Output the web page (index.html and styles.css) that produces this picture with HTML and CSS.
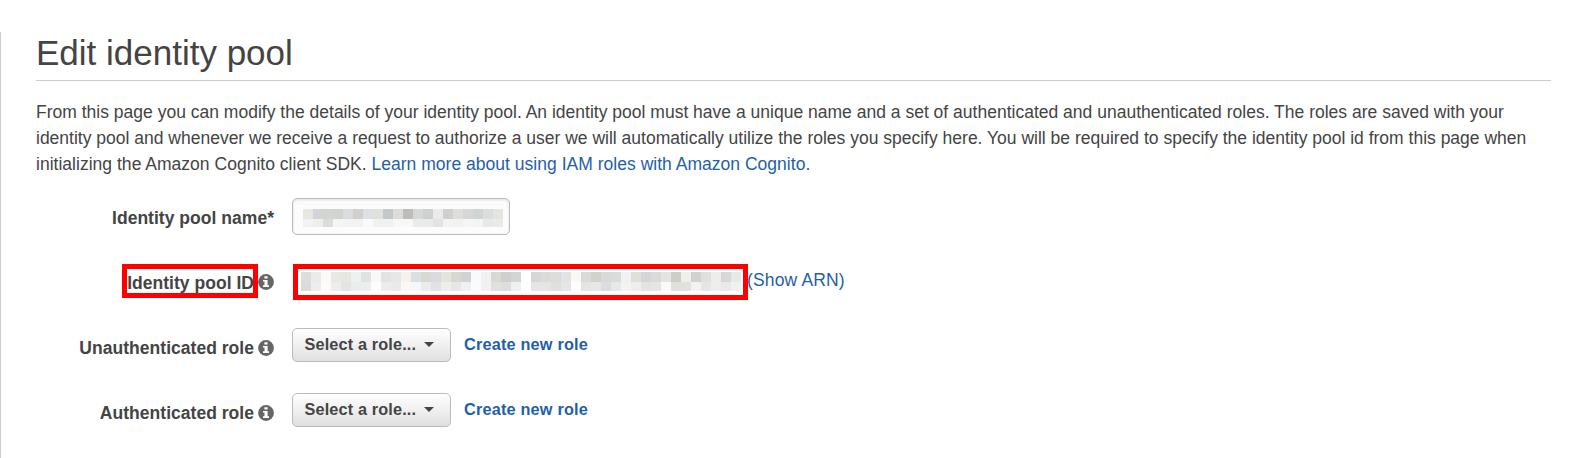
FILE: index.html
```html
<!DOCTYPE html>
<html lang="en">
<head>
<meta charset="utf-8">
<title>Edit identity pool</title>
<link rel="stylesheet" href="styles.css">
</head>
<body>
<svg class="defs" width="0" height="0" aria-hidden="true">
  <symbol id="info" viewBox="0 0 16 16">
    <circle cx="8" cy="8" r="7.9" fill="#666"/>
    <path d="M6.4 2.2h3.2v2.4H6.4zM5 5.9h4.6v5.4H11v1.8H5v-1.8h1.5V7.6H5z" fill="#fff"/>
  </symbol>
</svg>
<main class="page">
  <h1 class="title">Edit identity pool</h1>
  <p class="intro"><span class="first-line">From this page you can modify the details of your identity pool. An identity pool must have a unique name and a set of authenticated and unauthenticated roles. The roles are saved with your</span><br>identity pool and whenever we receive a request to authorize a user we will automatically utilize the roles you specify here. You will be required to specify the identity pool id from this page when<br><span class="last-line">initializing the Amazon Cognito client SDK. <a class="link" href="#">Learn more about using IAM roles with Amazon Cognito.</a></span></p>
  <div class="form">
    <div class="row">
      <div class="label">Identity pool name*</div>
      <div class="field name-field"><div class="mosaic" data-colors="e7e6df d2d4d5 d4d4d2 d2d2d0 dadddd d1d0cc dce1e3 dfe1dd c3c8ca dddeda bdbdb9 d5d8d7 cdd1d1 ecebea ced1d0 dfdfd9 d7d7da d1d5d4 dddddf e4e5e0|f2f2f2 eeeeea d9dddb f5f5f5 f3f3f3 f3f3f3 f8fafb f1f1ee f0f1f1 f8f8f6 f8f8f6 e9ebeb e9ebeb e2e3e4 f2f3f3 f1f2f1 f5f5f5 f3f5f5 e6e9e6 e9ebe9"></div></div>
    </div>
    <div class="row">
      <div class="label"><span class="mark">Identity pool ID</span><svg class="info"><use href="#info"/></svg></div>
      <div class="id-field"><div class="mosaic" data-colors="dddddb ebebe7 fbfaf8 e8e8e6 e8e8e0 edf2f1 e0e3e2 f8f8f8 e3e3e3 e6e7e6 f3f2ed dadfe0 d8d8d4 dadadf e3e4dc d8d8d3 d1d3d2 f8fafb f0f1f0 d8d9d4 cfd0ce d3d5d4 ffffff d5d6d5 dbdcd7 dddedb e1e4e4 f9f8f3 dadbd8 d1d1ce d9dad7 d8dbda f0f1f0 dfe0da d4d7d7 d9dbda e4e5e2 cecdc8 eff0eb d1d2d0 dfe1e0 edeee9 d7d8d5 e5e9e8|dbdbdc eeeeef fcfbf9 ededec e3e4e5 e9edeb edefef fdfdfb ededec e9eae9 f9f8f4 f5f8fa ececec e1e2e5 eeeeec e5e6e5 f0f0f2 f9fbfc f0f1f0 e0e1de dcdfdd edf1f2 ffffff e4e5e4 e5e6e4 dfe0dd e5e6e6 fffefe e4e5e3 e7e7e5 dbdedf e7e9e8 f3f3f1 edeeed e3e4e2 e5e6e4 fafafa e1e1dc e1e2de f2f2f2 e5e7e7 edeeed e9eae9 f0f1f1"></div></div>
      <a class="link arn" href="#">(Show ARN)</a>
    </div>
    <div class="row">
      <div class="label"><span>Unauthenticated role</span><svg class="info"><use href="#info"/></svg></div>
      <button class="select">Select a role...<span class="caret"></span></button>
      <a class="link create" href="#">Create new role</a>
    </div>
    <div class="row">
      <div class="label"><span>Authenticated role</span><svg class="info"><use href="#info"/></svg></div>
      <button class="select">Select a role...<span class="caret"></span></button>
      <a class="link create" href="#">Create new role</a>
    </div>
  </div>
</main>
<script src="mosaic.js"></script>
</body>
</html>
```
FILE: styles.css
```css
* { box-sizing: border-box; }
body {
  margin: 0;
  background: #fff;
  color: #444;
  font: 17.5px/26px "Liberation Sans", Arial, sans-serif;
}
.defs { display: block; }
.page {
  height: 426px;
  margin-top: 32px;
  padding: 0 33px 0 35px;
  border-left: 1px solid #ccc;
  overflow: hidden;
}
.title {
  margin: 0;
  height: 49px;
  border-bottom: 1px solid #ccc;
  font-size: 35px;
  font-weight: 400;
  line-height: 41px;
}
.intro { margin: 18px 0 0; white-space: nowrap; }
.first-line { letter-spacing: .006px; }
.last-line { letter-spacing: .02px; }
.link { color: #1f5fa8; text-decoration: none; }
.form { display: grid; grid-auto-rows: 65px; padding-top: 21px; }
.row { display: flex; align-items: flex-start; }
.label {
  display: flex;
  justify-content: flex-end;
  align-items: center;
  width: 238px;
  margin-right: 18px;
  padding: 7px 0 0;
  font-weight: 700;
  letter-spacing: .03px;
}
.info { width: 16px; height: 16px; margin-left: 4px; }
.mark {
  margin: -2px 0 -1px;
  padding: 4px 0 0 1px;
  line-height: 22px;
  outline: 5px solid #f00;
  outline-offset: -1px;
}
.field, .select { border: 1px solid #bbb; border-radius: 5px; }
.name-field {
  width: 218px;
  height: 37px;
  padding: 10px;
  background: #fcfcfc;
  box-shadow: inset 0 1px 3px rgba(0, 0, 0, .12);
}
.mosaic { display: grid; grid-auto-columns: 10px; grid-template-rows: 10px 8px; grid-auto-flow: column; }
.id-field {
  width: 455px;
  height: 36px;
  margin: 1px 0 0 1px;
  border: 5px solid #f00;
  padding: 3px 3px 0;
  overflow: hidden;
}
.id-field .mosaic { grid-template-rows: 10px 9px; }
.arn { margin-left: -1px; padding-top: 4px; letter-spacing: .15px; }
.select {
  display: flex;
  align-items: center;
  width: 159px;
  height: 34px;
  padding: 0 0 2px 11.5px;
  background: linear-gradient(#fff, #e0e0e0);
  color: #444;
  font: 700 16.25px/24px "Liberation Sans", Arial, sans-serif;
  letter-spacing: .15px;
}
.caret {
  margin-left: 8px;
  border: 0 solid transparent;
  border-width: 5px 5.5px 0;
  border-top-color: #444;
}
.create { margin-left: 13px; padding-top: 3px; font-weight: 700; font-size: 16.25px; letter-spacing: .2px; }
```
FILE: mosaic.js
```js
document.querySelectorAll('.mosaic').forEach(function (el) {
  var rows = el.dataset.colors.split('|').map(function (r) { return r.split(' '); });
  rows[0].forEach(function (_, i) {
    rows.forEach(function (row) {
      var cell = document.createElement('i');
      cell.style.background = '#' + row[i];
      el.appendChild(cell);
    });
  });
});
```
